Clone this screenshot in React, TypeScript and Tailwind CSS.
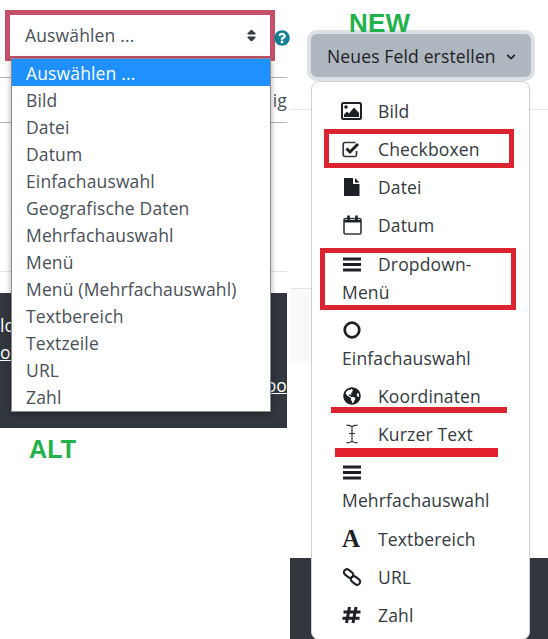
import type { ReactNode } from "react";
import { FaChevronDown, FaGlobeAmericas, FaQuestionCircle, FaSort } from "react-icons/fa";

const oldOptions = [
  "Auswählen ...",
  "Bild",
  "Datei",
  "Datum",
  "Einfachauswahl",
  "Geografische Daten",
  "Mehrfachauswahl",
  "Menü",
  "Menü (Mehrfachauswahl)",
  "Textbereich",
  "Textzeile",
  "URL",
  "Zahl",
];

const ImageIcon = () => (
  <svg width="21" height="18" viewBox="0 0 21 18" className="-ml-px">
    <rect x="1" y="1" width="19" height="16" rx="1.5" fill="none" stroke="#1d2125" strokeWidth="2" />
    <circle cx="5" cy="5" r="1.8" fill="#1d2125" />
    <path d="M3 15v-2.5l3-3 2 2 5-6 5 5.5V15z" fill="#1d2125" />
  </svg>
);

const CheckIcon = () => (
  <svg width="19" height="17" viewBox="0 0 19 17">
    <path d="M13 15.5H3A1.8 1.8 0 0 1 1.2 13.700V3.300A1.8 1.8 0 0 1 3 1.500h10.500M14.500 10v3.700A1.800 1.800 0 0 1 13 15.500" fill="none" stroke="#33383e" strokeWidth="1.7" />
    <path d="M4.500 7.500l3.500 3.500 8-8" fill="none" stroke="#1d2125" strokeWidth="3" />
  </svg>
);

const FileIcon = () => (
  <svg width="18" height="20" viewBox="0 0 18 20" className="ml-px">
    <path d="M1 1h9v6h6.500v12H1z" fill="#1d2125" />
    <path d="M12 1l4.500 4.500H12z" fill="#1d2125" />
  </svg>
);

const CalendarIcon = () => (
  <svg width="19" height="20" viewBox="0 0 19 20" className="ml-px">
    <rect x="1" y="3.500" width="17" height="15.500" rx="1.500" fill="none" stroke="#33383e" strokeWidth="1.600" />
    <path d="M1 6.200h17" stroke="#1d2125" strokeWidth="2.500" />
    <path d="M5.500 0.500v5M13.500 0.500v5" stroke="#1d2125" strokeWidth="2.600" />
  </svg>
);

const BarsIcon = () => (
  <svg width="18" height="15" viewBox="0 0 18 15" className="ml-px">
    <path d="M0 2h18M0 7.500h18M0 13h18" stroke="#1d2125" strokeWidth="3" />
  </svg>
);

const CircleIcon = () => (
  <svg width="18" height="18" viewBox="0 0 18 18" className="ml-px">
    <circle cx="9" cy="9" r="7.300" fill="none" stroke="#1d2125" strokeWidth="2.700" />
  </svg>
);

const CursorIcon = () => (
  <svg width="14" height="20" viewBox="0 0 14 20" className="ml-[3px]">
    <path d="M1.500 1.200c3 0 4.500.3 5.500 1.800 1-1.500 2.500-1.800 5.500-1.800M7 3v14M4 9.500h6M1.500 18.800c3 0 4.500-.3 5.500-1.800 1 1.500 2.500 1.800 5.500 1.800" fill="none" stroke="#33383e" strokeWidth="1.200" />
  </svg>
);

const LinkIcon = () => (
  <svg width="19" height="18" viewBox="0 0 19 18" className="ml-px">
    <g fill="none" stroke="#1d2125" strokeWidth="2">
      <rect x="0.500" y="2.500" width="10" height="6" rx="3" transform="rotate(38 5.500 5.500)" />
      <rect x="7.500" y="9.500" width="10" height="6" rx="3" transform="rotate(38 12.500 12.500)" />
    </g>
  </svg>
);

const HashIcon = () => (
  <svg width="19" height="18" viewBox="0 0 19 18">
    <path d="M7.500 1L4.500 17M14 1l-3 16M1.500 6h17M0.500 12.200h17" stroke="#1d2125" strokeWidth="3" fill="none" />
  </svg>
);

const MenuItem = ({ icon, label, mark, className }: { icon: ReactNode; label: string; mark?: ReactNode; className?: string }) => {
  return (
    <div className={`relative py-[5px] px-[30px] leading-[28px] text-[#343a40] ${className ?? ""}`}>
      <span className="inline-block w-[36px] -translate-y-[2px] align-middle text-[#1d2125]">{icon}</span>
      {label}
      {mark}
    </div>
  );
};

const AltColumn = () => {
  return (
    <div className="relative w-[287px] shrink-0">
      <div className="ml-[5px] mt-[10px] flex h-[51px] w-[270px] items-center justify-between border-[5px] border-[#c4506a] bg-white pl-[15px] pr-[11px] text-[#495057]">
        <span>Auswählen ...</span>
        <FaSort className="text-[15px] text-[#343a40]" />
      </div>
      <FaQuestionCircle className="absolute left-[274px] top-[30px] text-[16px] text-[#157f95]" />

      <div className="mt-[16px] flex h-[46px] items-center justify-end border-y border-[#adb5bd] text-[#495057]">
        <span>ig</span>
      </div>
      <div className="mt-[148px] h-[22px] border-t border-[#e2e4e7]" />
      <div className="h-[135px] overflow-hidden bg-[#32373e] pt-[19px] text-white">
        <div className="leading-[27px]">lo</div>
        <div className="leading-[27px] underline">olu</div>
        <div className="text-right leading-[39px] underline">oo</div>
      </div>
      <div className="ml-[29px] mt-[6px] text-[25px] leading-[30px] font-bold text-[#22b14c] [font-family:'Liberation_Sans',sans-serif]">
        ALT
      </div>

      <ul className="absolute left-[11px] top-[58px] w-[260px] border border-[#8a8d91] bg-white pb-px text-[#495057] shadow-[0_2px_6px_rgba(0,0,0,0.35)]">
        {oldOptions.map((option, i) => (
          <li
            key={option}
            className={i === 0 ? "h-[27px] bg-[#1e90ff] pl-[14px] leading-[28px] text-white" : "h-[27px] pl-[14px] leading-[28px]"}
          >
            {option}
          </li>
        ))}
      </ul>
    </div>
  );
};

const NewColumn = () => {
  return (
    <div className="grid h-[639px] flex-1 grid-cols-1">
      {/* page behind the menu */}
      <div className="col-start-1 row-start-1 ml-[3px] flex flex-col">
        <div className="h-[110px] border-b border-[#e2e4e7]" />
        <div className="mt-[178px] h-[75px] w-[40px] border-t border-[#e2e4e7] bg-[#f8f9fa]" />
        <div className="mt-[195px] h-[81px] bg-[#32373e]" />
      </div>

      <div className="relative col-start-1 row-start-1 pl-[20px]">
        <div className="ml-[42px] mt-[10px] h-[20px] text-[26px] leading-[26px] font-bold text-[#22b14c] [font-family:'Liberation_Sans',sans-serif]">
          NEW
        </div>
        <div className="flex h-[51px] w-[228px] items-center gap-[10px] rounded-[10px] border-[4px] border-[#dde0e4] bg-[#aeb6bf] pl-[16px] pt-[2px] text-[#1d2125]">
          Neues Feld erstellen
          <FaChevronDown className="text-[10px]" />
        </div>

        <div className="absolute left-[24px] top-[81px] h-[559px] w-[219px] rounded-[8px] border border-[#ced0d3] bg-white pt-[10px]">
          <MenuItem icon={<ImageIcon />} label="Bild" />
          <MenuItem
            icon={<CheckIcon />}
            label="Checkboxen"
            mark={<div className="absolute left-[12px] top-[-1px] h-[39px] w-[190px] border-[5px] border-[#dc2430]" />}
          />
          <MenuItem icon={<FileIcon />} label="Datei" />
          <MenuItem icon={<CalendarIcon />} label="Datum" />
          <MenuItem
            className="mt-px"
            icon={<BarsIcon />}
            label="Dropdown-Menü"
            mark={<div className="absolute left-[8px] top-[3px] h-[62px] w-[196px] border-[5px] border-[#dc2430]" />}
          />
          <MenuItem icon={<CircleIcon />} label="Einfachauswahl" />
          <MenuItem
            icon={<FaGlobeAmericas className="ml-px text-[18px]" />}
            label="Koordinaten"
            mark={<div className="absolute left-[19px] top-[30px] h-[6px] w-[176px] bg-[#dc2430]" />}
          />
          <MenuItem
            icon={<CursorIcon />}
            label="Kurzer Text"
            mark={<div className="absolute left-[23px] top-[33px] h-[9px] w-[163px] bg-[#e3202e]" />}
          />
          <MenuItem icon={<BarsIcon />} label="Mehrfachauswahl" />
          <MenuItem
            className="mt-px"
            icon={<span className="block h-[20px] text-[25px] leading-[20px] font-bold [font-family:'Liberation_Serif',serif]">A</span>}
            label="Textbereich"
          />
          <MenuItem icon={<LinkIcon />} label="URL" />
          <MenuItem icon={<HashIcon />} label="Zahl" />
        </div>
      </div>
    </div>
  );
};

const App = () => {
  return (
    <div className="flex h-[639px] w-[548px] overflow-hidden bg-white text-[17.5px] tracking-[0.15px] [font-family:'Open_Sans',sans-serif]">
      <AltColumn />
      <NewColumn />
    </div>
  );
};

export default App;
